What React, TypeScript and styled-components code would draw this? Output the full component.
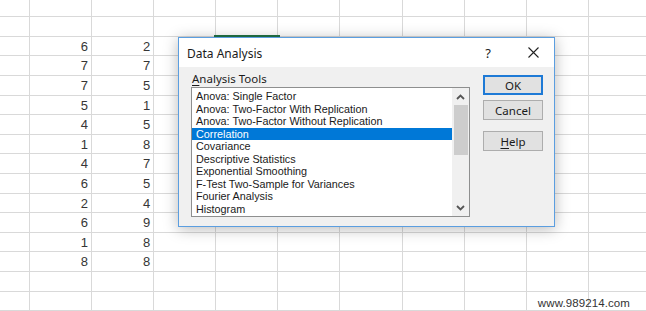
import React from "react";
import styled, { createGlobalStyle } from "styled-components";

const GlobalStyle = createGlobalStyle`
  html, body {
    margin: 0;
    padding: 0;
    background: #ffffff;
    overflow: hidden;
  }
`;

const Page = styled.div`
  position: relative;
  width: 646px;
  height: 311px;
  overflow: hidden;
  background: #ffffff;
`;

const Sheet = styled.div`
  display: grid;
  grid-template-columns: 30px repeat(11, 62.1px);
  grid-template-rows: 17.2px repeat(15, 19.6px);
`;

const Cell = styled.div<{ $selected?: boolean }>`
  box-sizing: border-box;
  border-right: 1px solid #d9d9d9;
  border-bottom: 1px solid #d9d9d9;
  padding-right: 3px;
  text-align: right;
  font-family: "Liberation Sans", Arial, sans-serif;
  font-size: 13px;
  line-height: 19px;
  color: #363636;
  outline: ${(p) => (p.$selected ? "2px solid #217346" : "none")};
  position: ${(p) => (p.$selected ? "relative" : "static")};
`;

const Watermark = styled.div`
  position: absolute;
  right: 16px;
  bottom: 2px;
  font-family: "Liberation Sans", Arial, sans-serif;
  font-size: 11.5px;
  color: #333333;
  letter-spacing: 0.1px;
`;

const Dialog = styled.div`
  position: absolute;
  left: 178px;
  top: 37px;
  width: 377px;
  height: 190px;
  box-sizing: border-box;
  border: 1px solid #5b9ee0;
  background: #f0f0f0;
  box-shadow: 0 2px 14px rgba(0, 0, 0, 0.28);
  display: flex;
  flex-direction: column;
  font-family: "Noto Sans", "Open Sans", sans-serif;
  color: #1a1a1a;
`;

const TitleBar = styled.div`
  height: 29px;
  background: #ffffff;
  display: flex;
  align-items: center;
  padding-left: 8px;
  padding-right: 6px;
`;

const Title = styled.span`
  flex: 1;
  font-size: 12px;
  padding-top: 1px;
`;

const TitleButton = styled.span<{ $gap?: number }>`
  width: 30px;
  display: flex;
  justify-content: center;
  align-items: center;
  font-size: 13px;
  color: #222;
  margin-right: ${(p) => p.$gap ?? 0}px;
`;

const Body = styled.div`
  flex: 1;
  display: flex;
  gap: 13px;
  padding: 4px 11px 0 12px;
`;

const ToolsColumn = styled.div`
  display: flex;
  flex-direction: column;
`;

const Label = styled.div`
  font-size: 11.5px;
  line-height: 16px;
  padding-left: 1px;
`;

const Key = styled.span`
  text-decoration: underline;
  text-underline-offset: 2px;
`;

const ListBox = styled.div`
  width: 279px;
  height: 130px;
  box-sizing: border-box;
  border: 1px solid #8e8f8f;
  background: #ffffff;
  display: flex;
`;

const Items = styled.div`
  flex: 1;
  padding-top: 2px;
`;

const Item = styled.div<{ $active?: boolean }>`
  height: 12.56px;
  line-height: 12.56px;
  padding-left: 4px;
  font-family: "Liberation Sans", Arial, sans-serif;
  font-size: 10.8px;
  white-space: nowrap;
  background: ${(p) => (p.$active ? "#0078d7" : "transparent")};
  color: ${(p) => (p.$active ? "#ffffff" : "#1a1a1a")};
`;

const ScrollBar = styled.div`
  width: 17px;
  background: #f0f0f0;
  display: flex;
  flex-direction: column;
  align-items: center;
`;

const Arrow = styled.div`
  height: 17px;
  width: 17px;
  display: flex;
  align-items: center;
  justify-content: center;
`;

const Thumb = styled.div`
  width: 14px;
  height: 50px;
  background: #cdcdcd;
`;

const Track = styled.div`
  flex: 1;
`;

const Buttons = styled.div`
  display: flex;
  flex-direction: column;
  gap: 5px;
  padding-top: 4px;
`;

const Button = styled.div<{ $default?: boolean; $spaced?: boolean }>`
  width: 60px;
  height: 20px;
  box-sizing: border-box;
  border: ${(p) => (p.$default ? "2px solid #1e7ad6" : "1px solid #adadad")};
  background: #e1e1e1;
  display: flex;
  align-items: center;
  justify-content: center;
  font-size: 11.5px;
  margin-top: ${(p) => (p.$spaced ? "6px" : "0")};
`;

const Chevron = ({ up }: { up?: boolean }) => (
  <svg width="9" height="6" viewBox="0 0 9 6">
    <polyline
      points={up ? "1,5 4.5,1.5 8,5" : "1,1 4.5,4.5 8,1"}
      fill="none"
      stroke="#555"
      strokeWidth="1.8"
    />
  </svg>
);

const CloseIcon = () => (
  <svg width="11" height="11" viewBox="0 0 11 11">
    <path d="M0.5 0.5 L10.5 10.5 M10.5 0.5 L0.5 10.5" stroke="#222" strokeWidth="1.1" />
  </svg>
);

const colA = [6, 7, 7, 5, 4, 1, 4, 6, 2, 6, 1, 8];
const colB = [2, 7, 5, 1, 5, 8, 7, 5, 4, 9, 8, 8];

const tools = [
  "Anova: Single Factor",
  "Anova: Two-Factor With Replication",
  "Anova: Two-Factor Without Replication",
  "Correlation",
  "Covariance",
  "Descriptive Statistics",
  "Exponential Smoothing",
  "F-Test Two-Sample for Variances",
  "Fourier Analysis",
  "Histogram",
];

export default function App() {
  const rows = Array.from({ length: 16 }, (_, r) => r);
  const cols = Array.from({ length: 12 }, (_, c) => c);

  return (
    <Page>
      <GlobalStyle />
      <Sheet>
        {rows.map((r) =>
          cols.map((c) => {
            const i = r - 2;
            let value: React.ReactNode = null;
            if (i >= 0 && i < 12) {
              if (c === 1) value = colA[i];
              if (c === 2) value = colB[i];
            }
            return (
              <Cell key={`${r}-${c}`} $selected={r === 2 && c === 4}>
                {value}
              </Cell>
            );
          })
        )}
      </Sheet>

      <Dialog>
        <TitleBar>
          <Title>Data Analysis</Title>
          <TitleButton $gap={15}>?</TitleButton>
          <TitleButton>
            <CloseIcon />
          </TitleButton>
        </TitleBar>
        <Body>
          <ToolsColumn>
            <Label>
              <Key>A</Key>nalysis Tools
            </Label>
            <ListBox>
              <Items>
                {tools.map((t) => (
                  <Item key={t} $active={t === "Correlation"}>
                    {t}
                  </Item>
                ))}
              </Items>
              <ScrollBar>
                <Arrow>
                  <Chevron up />
                </Arrow>
                <Thumb />
                <Track />
                <Arrow>
                  <Chevron />
                </Arrow>
              </ScrollBar>
            </ListBox>
          </ToolsColumn>
          <Buttons>
            <Button $default>OK</Button>
            <Button>Cancel</Button>
            <Button $spaced>
              <Key>H</Key>elp
            </Button>
          </Buttons>
        </Body>
      </Dialog>

      <Watermark>www.989214.com</Watermark>
    </Page>
  );
}
